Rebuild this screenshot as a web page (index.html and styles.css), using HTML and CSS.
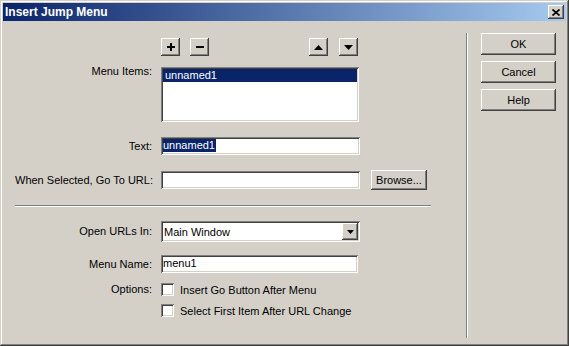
FILE: index.html
```html
<!DOCTYPE html>
<html>
	<head>
		<meta charset="utf-8">
		<title>Insert Jump Menu</title>
		<link rel="stylesheet" href="styles.css">
	</head>
	<body>
		<div class="window">
			<div class="titlebar">
				<span class="title">Insert Jump Menu</span>
				<div class="btn close">
					<svg width="8" height="7" viewBox="0 0 8 7"><path d="M0.5 0.5L7.5 6.5M7.5 0.5L0.5 6.5" stroke="#000" stroke-width="1.7"/></svg>
				</div>
			</div>
			<div class="dialog">
				<div class="form">
					<div class="tools">
						<div class="btn tool">
							<svg width="8" height="8" viewBox="0 0 8 8"><path d="M3 0h2v3h3v2H5v3H3V5H0V3h3z"/></svg>
						</div>
						<div class="btn tool minus">
							<svg width="8" height="2" viewBox="0 0 8 2"><rect width="8" height="2"/></svg>
						</div>
						<div class="btn tool up">
							<svg width="9" height="5" viewBox="0 0 9 5"><polygon points="0,5 4.5,0 9,5"/></svg>
						</div>
						<div class="btn tool down">
							<svg width="9" height="5" viewBox="0 0 9 5"><polygon points="0,0 9,0 4.5,5"/></svg>
						</div>
					</div>

					<div class="row top list-row">
						<div class="label">Menu Items:</div>
						<div class="field listbox">
							<div class="item selected">unnamed1</div>
						</div>
					</div>

					<div class="row text-row">
						<div class="label">Text:</div>
						<div class="field input"><span class="hilite">unnamed1</span></div>
					</div>

					<div class="row url-row">
						<div class="label">When Selected, Go To URL:</div>
						<div class="field input"></div>
						<div class="btn browse">Browse...</div>
					</div>

					<div class="separator"></div>

					<div class="row select-row">
						<div class="label">Open URLs In:</div>
						<div class="field combo">
							<span class="combo-text">Main Window</span>
							<div class="btn drop">
								<svg width="7" height="4" viewBox="0 0 7 4"><polygon points="0,0 7,0 3.5,4"/></svg>
							</div>
						</div>
					</div>

					<div class="row name-row">
						<div class="label">Menu Name:</div>
						<div class="field input name">menu1</div>
					</div>

					<div class="row check-row">
						<div class="label">Options:</div>
						<div class="check"></div>
						<span class="check-text">Insert Go Button After Menu</span>
					</div>
					<div class="row check-row second">
						<div class="label"></div>
						<div class="check"></div>
						<span class="check-text">Select First Item After URL Change</span>
					</div>
				</div>

				<div class="vline"></div>

				<div class="actions">
					<div class="btn action">OK</div>
					<div class="btn action">Cancel</div>
					<div class="btn action">Help</div>
				</div>
			</div>
		</div>
	</body>
</html>
```

FILE: styles.css
```css
* {
	margin: 0;
	padding: 0;
	box-sizing: border-box;
}

body {
	font-family: "Liberation Sans", Arial, sans-serif;
	font-size: 11px;
	color: #000;
	background: #d4d0c8;
}

/* 窗口外框 */
.window {
	width: 569px;
	height: 346px;
	padding: 3px;
	display: flex;
	flex-direction: column;
	background: #d4d0c8;
	box-shadow: inset -1px -1px #404040, inset 1px 1px #d4d0c8, inset -2px -2px #808080, inset 2px 2px #fff;
}

.titlebar {
	height: 18px;
	display: flex;
	align-items: center;
	justify-content: space-between;
	padding-left: 2px;
	padding-right: 2px;
	background: linear-gradient(to right, #0a246a, #a6caf0);
}

.title {
	color: #fff;
	font-weight: bold;
	font-size: 12px;
}

/* 凸起按钮 */
.btn {
	display: flex;
	justify-content: center;
	align-items: center;
	background: #d4d0c8;
	box-shadow: inset -1px -1px #404040, inset 1px 1px #fff, inset -2px -2px #808080, inset 2px 2px #d4d0c8;
}

.close {
	width: 16px;
	height: 14px;
}

.dialog {
	flex: 1;
	display: flex;
}

.form {
	width: 463px;
	padding-left: 12px;
}

.tools {
	display: flex;
	margin-top: 17px;
	padding-left: 146px;
}

.tool {
	width: 19px;
	height: 18px;
}

.tool svg {
	fill: #000;
}

.minus {
	margin-left: 10px;
}

.up {
	margin-left: 100px;
}

.down {
	margin-left: 11px;
}

.row {
	display: flex;
	align-items: center;
}

.row.top {
	align-items: flex-start;
}

.label {
	width: 137px;
	margin-right: 9px;
	text-align: right;
	white-space: nowrap;
	line-height: 13px;
}

.list-row .label {
	margin-top: -2px;
}

/* 凹陷输入框 */
.field {
	background: #fff;
	box-shadow: inset 1px 1px #808080, inset -1px -1px #fff, inset 2px 2px #404040, inset -2px -2px #d4d0c8;
}

.list-row {
	margin-top: 11px;
}

.listbox {
	width: 198px;
	height: 55px;
	padding: 2px;
}

.item {
	height: 13px;
	line-height: 13px;
	padding-left: 2px;
}

.item.selected {
	background: #0a246a;
	color: #fff;
}

.input {
	width: 199px;
	height: 18px;
	padding: 2px 2px 0;
	line-height: 13px;
	white-space: nowrap;
}

.hilite {
	display: inline-block;
	background: #0a246a;
	color: #fff;
	padding-right: 1px;
}

.text-row {
	margin-top: 15px;
}

.url-row {
	margin-top: 15px;
}

.browse {
	width: 56px;
	height: 20px;
	margin-left: 11px;
}

.separator {
	width: 416px;
	height: 2px;
	margin-top: 15px;
	border-top: 1px solid #808080;
	border-bottom: 1px solid #fff;
}

.select-row {
	margin-top: 14px;
}

.combo {
	width: 199px;
	height: 21px;
	display: flex;
	align-items: center;
	justify-content: space-between;
	padding: 2px;
}

.combo-text {
	padding-left: 1px;
}

.drop {
	width: 16px;
	height: 17px;
}

.name-row {
	margin-top: 13px;
}

.input.name {
	width: 197px;
}

.check-row {
	margin-top: 10px;
	height: 13px;
}

.check-row.second {
	margin-top: 8px;
}

.check {
	width: 13px;
	height: 13px;
	background: #fff;
	box-shadow: inset 1px 1px #808080, inset -1px -1px #fff, inset 2px 2px #404040, inset -2px -2px #d4d0c8;
}

.check-text {
	margin-left: 6px;
}

.vline {
	width: 2px;
	height: 305px;
	margin-top: 12px;
	border-left: 1px solid #808080;
	border-right: 1px solid #fff;
}

.actions {
	display: flex;
	flex-direction: column;
	gap: 6px;
	margin-left: 13px;
	padding-top: 12px;
}

.action {
	width: 75px;
	height: 22px;
}
```
